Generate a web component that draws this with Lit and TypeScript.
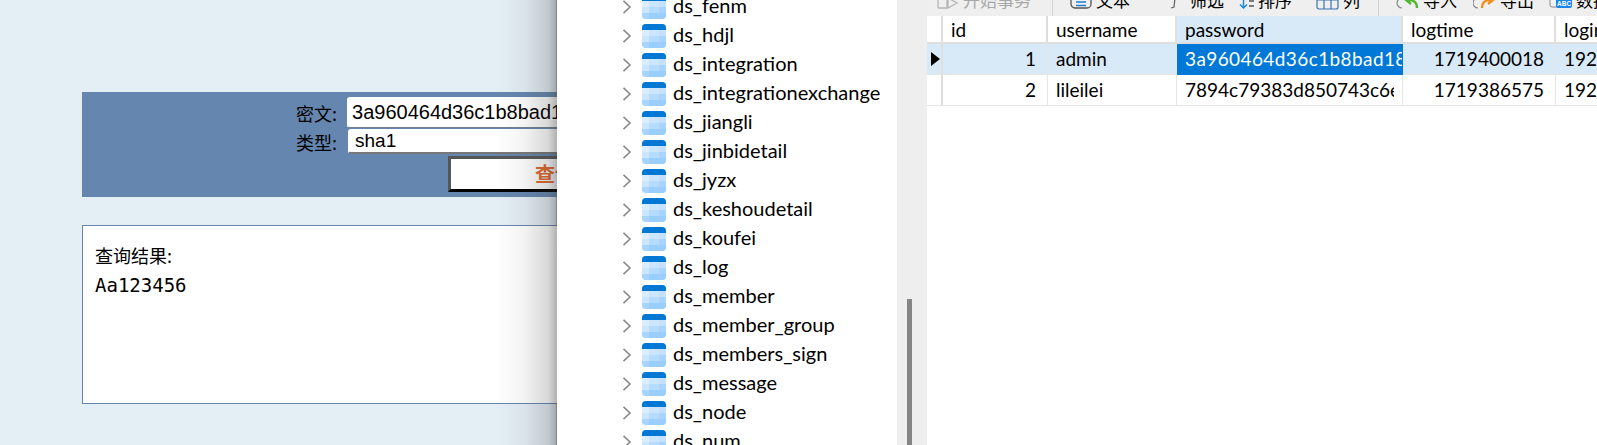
import { LitElement, html, css, svg } from "lit";
import { customElement } from "lit/decorators.js";

const tables = ["ds_fenm","ds_hdjl","ds_integration","ds_integrationexchange","ds_jiangli","ds_jinbidetail","ds_jyzx","ds_keshoudetail","ds_koufei","ds_log","ds_member","ds_member_group","ds_members_sign","ds_message","ds_node","ds_num"];

const tableIcon = html`<svg class="ticon" width="24" height="24" viewBox="0 0 24 24">
  <defs><clipPath id="tc"><rect width="24" height="24" rx="4"/></clipPath></defs>
  <g clip-path="url(#tc)">
    <rect width="24" height="24" fill="#b3daff"/>
    <rect width="24" height="6" fill="#0078d4"/>
    <rect y="6" width="7" height="6" fill="#dbeeff"/><rect x="7" y="6" width="10" height="6" fill="#cde6ff"/><rect x="17" y="6" width="7" height="6" fill="#c4e2ff"/>
    <rect y="12" width="7" height="6" fill="#cde6ff"/><rect x="7" y="12" width="10" height="6" fill="#b5dbff"/><rect x="17" y="12" width="7" height="6" fill="#a8d5ff"/>
    <rect y="18" width="7" height="6" fill="#a8d5ff"/><rect x="7" y="18" width="10" height="6" fill="#99ceff"/><rect x="17" y="18" width="7" height="6" fill="#99ceff"/>
  </g></svg>`;

const chevron = html`<svg class="chev" width="10" height="14" viewBox="0 0 10 14"><path d="M1.5 .8 L8 7 L1.5 13.2" fill="none" stroke="#8a8a8a" stroke-width="1.6"/></svg>`;

const ic = (content: unknown, w = 22) => html`<svg class="tbi" width="${w}" height="22" viewBox="0 0 ${w} 22">${content}</svg>`;

@customElement("app-root")
export class AppRoot extends LitElement {
  static styles = css`
    :host { display: block; width: 1597px; height: 445px; overflow: hidden; font-family: "Liberation Sans", sans-serif; color: #000; }
    .stage { display: flex; width: 1597px; height: 445px; background: #e4eef5; position: relative; overflow: hidden; }
    .page { flex: 0 0 557px; overflow: hidden; padding: 92px 0 0 82px; box-sizing: border-box; position: relative; }
    .shade { position: absolute; top: 0; right: 0; bottom: 0; width: 60px; background: linear-gradient(to right, rgba(60,60,60,0) 0%, rgba(60,60,60,.06) 45%, rgba(60,60,60,.2) 85%, rgba(50,50,50,.38) 100%); }
    .panel { width: 1000px; height: 105px; background: #6586ae; padding: 5px 0 0 214px; box-sizing: border-box; }
    .row { display: flex; align-items: center; }
    .lab { font: 18px "Noto Sans CJK SC", sans-serif; line-height: 24px; white-space: nowrap; }
    .inp { background: #fff; border: 1px solid #76808c; border-radius: 3px; white-space: nowrap; box-sizing: border-box; width: 500px; display: flex; align-items: center; }
    .r1 { height: 31px; margin-bottom: 1px; }
    .r1 .inp { height: 31px; margin-left: 10px; padding-left: 4px; font-size: 20px; border-color: #fff; border-bottom-color: #76808c; }
    .r2 { height: 25px; }
    .r2 .inp { height: 25px; margin-left: 11px; padding-left: 6px; font-size: 19px; border-color: #fff; border-bottom: 2px solid #777; border-right: 2px solid #777; }
    .btn { margin: 2px 0 0 152px; width: 300px; height: 36px; background: #fff; border-style: solid; border-width: 3px; border-color: #565656 #000 #000 #565656; box-sizing: border-box; padding-left: 84px; color: #e0672a; font: bold 20px/29px "Noto Sans CJK SC", sans-serif; }
    .result { margin-top: 28px; width: 1000px; height: 179px; background: #fff; border: 1px solid #6586ae; box-sizing: border-box; padding: 15px 12px; }
    .result .t { font: 18px/29px "Noto Sans CJK SC", sans-serif; }
    .result .v { font: 19px/29px "DejaVu Sans Mono", monospace; margin-top: 1px; }

    .tree { flex: 0 0 341px; background: #fff; overflow: hidden; box-sizing: border-box; border-left: 1px solid #b0b4b8; margin-left: -1px; }
    .list { margin-top: -8px; padding-left: 65px; }
    .node { display: flex; align-items: center; height: 29px; white-space: nowrap; font: 20px "Lato", sans-serif; }
    .node span { padding-bottom: 3px; }
    .chev { flex: none; margin-right: 10px; }
    .ticon { flex: none; margin-right: 7px; }
    .track { flex: 0 0 30px; background: #eeeeee; padding: 299px 0 0 10px; box-sizing: border-box; }
    .thumb { width: 5px; height: 146px; background: #858585; }

    .main { flex: 1; min-width: 0; display: flex; flex-direction: column; background: #fff; overflow: hidden; position: relative; }
    .toolbar { flex: 0 0 16px; height: 16px; background: #efefef; display: flex; align-items: flex-end; overflow: hidden; font: 17px/22px "Noto Sans CJK SC", sans-serif; white-space: nowrap; position: relative; }
    .tool { display: flex; align-items: center; gap: 4px; height: 24px; margin-bottom: 4px; flex: none; }
    .grey { color: #a8a8a8; }
    .sep { flex: none; width: 1px; height: 16px; background: #d4d4d4; }
    .tbi { flex: none; }
    .m1 { margin-left: 9px; } .m2 { margin-left: 21px; } .m3 { margin-left: 17px; } .m4 { margin-left: 40px; } .m5 { margin-left: 15px; }
    .m6 { margin-left: 24px; } .m7 { margin-left: 18px; } .m8 { margin-left: 16px; }
    .grid { display: grid; grid-template-columns: 16px 105px 129px 226px 153px 60px; font: 19px/28px "Lato", sans-serif; }
    .c { box-sizing: border-box; height: 31px; padding: 0 8px; overflow: hidden; white-space: nowrap; border-right: 1px solid #e6e6e6; border-bottom: 1px solid #e6e6e6; display: flex; align-items: center; }
    .h { height: 28px; padding-top: 2px; border-bottom: 2px solid #dfdfdf; border-right: 2px solid #dfdfdf; }
    .num { justify-content: flex-end; padding-right: 11px; }
    .sel { background: #d8e9f8; }
    .focus { background: #0078d7; color: #fff; border-color: #0078d7; padding-right: 0; }
    .focus span { letter-spacing: .4px; flex: none; }
    .gut { padding: 0; justify-content: center; border-right: 2px solid #dfdfdf; }
    .gut svg { margin-left: 3px; }
    .clipcell { padding-right: 0; }
    .clipcell span { display: block; width: 209px; overflow: hidden; flex: none; }
    .nb { border-right: none; }
  `;

  render() {
    return html`<div class="stage">
      <div class="page">
        <div class="panel">
          <div class="row r1"><span class="lab">密文:</span><div class="inp">3a960464d36c1b8bad18</div></div>
          <div class="row r2"><span class="lab">类型:</span><div class="inp">sha1</div></div>
          <div class="btn">查询</div>
        </div>
        <div class="result">
          <div class="t">查询结果:</div>
          <div class="v">Aa123456</div>
        </div>
        <div class="shade"></div>
      </div>
      <div class="tree"><div class="list">
        ${tables.map((t) => html`<div class="node">${chevron}${tableIcon}<span>${t}</span></div>`)}
      </div></div>
      <div class="track"><div class="thumb"></div></div>
      <div class="main">
        <div class="toolbar">
          <div class="tool grey m1">${ic(svg`<path d="M2 9h9v10H3a1 1 0 0 1-1-1zM12 9l9 5-9 5z" fill="none" stroke="#b5b5b5" stroke-width="1.3"/>`, 23)}<span>开始事务</span></div>
          <div class="sep m2"></div>
          <div class="tool m3">${ic(svg`<rect x="1" y="-2" width="20" height="21" rx="4" fill="none" stroke="#555" stroke-width="1.3"/><path d="M6 13h10M6 16.5h10" stroke="#1a7fd8" stroke-width="1.5"/>`)}<span>文本</span></div>
          <div class="tool m4">${ic(svg`<path d="M1 19 L4 18 L5 9" fill="none" stroke="#666" stroke-width="1.3"/>`, 16)}<span>筛选</span></div>
          <div class="tool m5">${ic(svg`<path d="M4.5 8v11M1 15.5l3.5 3.5 3.5-3.5" fill="none" stroke="#1a8ae0" stroke-width="1.5"/><path d="M10 17h5M10 12h5" stroke="#555" stroke-width="1.4"/>`, 15)}<span>排序</span></div>
          <div class="tool m6">${ic(svg`<path d="M1 11h21v7a2 2 0 0 1-2 2H3a2 2 0 0 1-2-2zM8 5v15M15 5v15M1 5h21v6" fill="none" stroke="#3a72b8" stroke-width="1.2"/>`, 23)}<span>列</span></div>
          <div class="sep m7"></div>
          <div class="tool m8">${ic(svg`<path d="M7 9a5 5 0 0 0 0 10" fill="none" stroke="#888" stroke-width="1.2"/><path d="M22 19c0-6-3-8-9-8M16 6l-5 5 5 4" fill="none" stroke="#4fb82e" stroke-width="2.4"/>`, 24)}<span>导入</span></div>
          <div class="tool m8">${ic(svg`<path d="M5 9a5 5 0 0 0 0 10" fill="none" stroke="#888" stroke-width="1.2"/><path d="M9 19c0-6 3-8 9-8M15 6l5 5-5 4" fill="none" stroke="#f0911c" stroke-width="2.4"/>`, 23)}<span>导出</span></div>
          <div class="tool m5">${ic(svg`<path d="M1 10a6 3 0 0 1 8 -1v9h-6a2 2 0 0 1-2-2z" fill="#f2f2f2" stroke="#888" stroke-width="1"/><rect x="7" y="8" width="16" height="11" rx="2" fill="#1a86e8"/><text x="8" y="16.5" font-size="6.5" font-weight="700" font-family="Liberation Sans" fill="#fff">ABC</text>`, 23)}<span>数据</span></div>
        </div>
        <div class="grid">
          <div class="c h gut"></div><div class="c h">id</div><div class="c h">username</div><div class="c h sel">password</div><div class="c h">logtime</div><div class="c h nb">loginip</div>
          <div class="c sel gut"><svg width="9" height="14" viewBox="0 0 9 14"><path d="M0 0l9 7-9 7z" fill="#000"/></svg></div>
          <div class="c sel num">1</div><div class="c sel">admin</div><div class="c focus"><span>3a960464d36c1b8bad18</span></div><div class="c sel num">1719400018</div><div class="c sel nb">192.168.1.1</div>
          <div class="c gut"></div>
          <div class="c num">2</div><div class="c">lileilei</div><div class="c clipcell"><span>7894c79383d850743c6e</span></div><div class="c num">1719386575</div><div class="c nb">192.168.1.1</div>
        </div>
      </div>
    </div>`;
  }
}
